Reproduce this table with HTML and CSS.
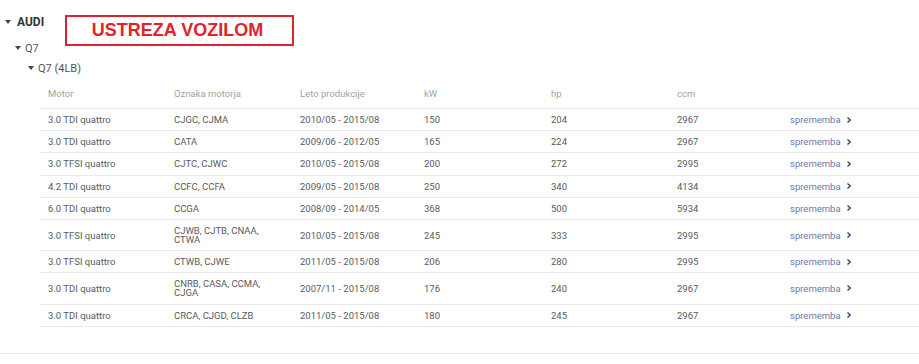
FILE: index.html
```html
<!DOCTYPE html>
<html>
<head>
<meta charset="utf-8">
<link rel="stylesheet" href="styles.css">
</head>
<body>
<div class="page">
  <div class="tree">
    <div class="node lvl0"><span class="caret"></span>AUDI</div>
    <div class="badge">USTREZA VOZILOM</div>
    <div class="node lvl1"><span class="caret"></span>Q7</div>
    <div class="node lvl2"><span class="caret"></span>Q7 (4LB)</div>
  </div>
  <div class="table">
    <div class="row head">
      <div>Motor</div><div>Oznaka motorja</div><div>Leto produkcije</div><div>kW</div><div>hp</div><div>ccm</div><div></div>
    </div>
    <div class="row"><div>3.0 TDI quattro</div><div class="code">CJGC, CJMA</div><div>2010/05 - 2015/08</div><div>150</div><div>204</div><div>2967</div><div><a class="link">sprememba<svg viewBox="0 0 6 8" width="6" height="8"><path d="M1.5 1.5 L4.2 4 L1.5 6.5" fill="none" stroke="#34446b" stroke-width="1.4"/></svg></a></div></div>
    <div class="row"><div>3.0 TDI quattro</div><div class="code">CATA</div><div>2009/06 - 2012/05</div><div>165</div><div>224</div><div>2967</div><div><a class="link">sprememba<svg viewBox="0 0 6 8" width="6" height="8"><path d="M1.5 1.5 L4.2 4 L1.5 6.5" fill="none" stroke="#34446b" stroke-width="1.4"/></svg></a></div></div>
    <div class="row"><div>3.0 TFSI quattro</div><div class="code">CJTC, CJWC</div><div>2010/05 - 2015/08</div><div>200</div><div>272</div><div>2995</div><div><a class="link">sprememba<svg viewBox="0 0 6 8" width="6" height="8"><path d="M1.5 1.5 L4.2 4 L1.5 6.5" fill="none" stroke="#34446b" stroke-width="1.4"/></svg></a></div></div>
    <div class="row"><div>4.2 TDI quattro</div><div class="code">CCFC, CCFA</div><div>2009/05 - 2015/08</div><div>250</div><div>340</div><div>4134</div><div><a class="link">sprememba<svg viewBox="0 0 6 8" width="6" height="8"><path d="M1.5 1.5 L4.2 4 L1.5 6.5" fill="none" stroke="#34446b" stroke-width="1.4"/></svg></a></div></div>
    <div class="row"><div>6.0 TDI quattro</div><div class="code">CCGA</div><div>2008/09 - 2014/05</div><div>368</div><div>500</div><div>5934</div><div><a class="link">sprememba<svg viewBox="0 0 6 8" width="6" height="8"><path d="M1.5 1.5 L4.2 4 L1.5 6.5" fill="none" stroke="#34446b" stroke-width="1.4"/></svg></a></div></div>
    <div class="row"><div>3.0 TFSI quattro</div><div class="code">CJWB, CJTB, CNAA, CTWA</div><div>2010/05 - 2015/08</div><div>245</div><div>333</div><div>2995</div><div><a class="link">sprememba<svg viewBox="0 0 6 8" width="6" height="8"><path d="M1.5 1.5 L4.2 4 L1.5 6.5" fill="none" stroke="#34446b" stroke-width="1.4"/></svg></a></div></div>
    <div class="row"><div>3.0 TFSI quattro</div><div class="code">CTWB, CJWE</div><div>2011/05 - 2015/08</div><div>206</div><div>280</div><div>2995</div><div><a class="link">sprememba<svg viewBox="0 0 6 8" width="6" height="8"><path d="M1.5 1.5 L4.2 4 L1.5 6.5" fill="none" stroke="#34446b" stroke-width="1.4"/></svg></a></div></div>
    <div class="row"><div>3.0 TDI quattro</div><div class="code">CNRB, CASA, CCMA, CJGA</div><div>2007/11 - 2015/08</div><div>176</div><div>240</div><div>2967</div><div><a class="link">sprememba<svg viewBox="0 0 6 8" width="6" height="8"><path d="M1.5 1.5 L4.2 4 L1.5 6.5" fill="none" stroke="#34446b" stroke-width="1.4"/></svg></a></div></div>
    <div class="row"><div>3.0 TDI quattro</div><div class="code">CRCA, CJGD, CLZB</div><div>2011/05 - 2015/08</div><div>180</div><div>245</div><div>2967</div><div><a class="link">sprememba<svg viewBox="0 0 6 8" width="6" height="8"><path d="M1.5 1.5 L4.2 4 L1.5 6.5" fill="none" stroke="#34446b" stroke-width="1.4"/></svg></a></div></div>
  </div>
  <div class="footer-line"></div>
</div>
</body>
</html>
```
FILE: styles.css
```css
html, body {
  margin: 0;
  padding: 0;
  background: #fff;
}
.page {
  position: relative;
  font-family: Roboto, "Liberation Sans", sans-serif;
  color: #5a5a5a;
  padding-top: 14px;
}
.tree {
  display: flex;
  flex-direction: column;
}
.node {
  display: flex;
  align-items: center;
  color: #444;
}
.caret {
  display: inline-block;
  width: 0;
  height: 0;
  border-left: 3px solid transparent;
  border-right: 3px solid transparent;
  border-top: 4px solid #444;
  margin-right: 4px;
}
.lvl0 {
  padding-left: 5px;
  font-size: 12px;
  font-weight: bold;
  height: 16px;
  color: #333;
}
.lvl0 .caret { margin-right: 6px; }
.lvl1 {
  padding-left: 15px;
  font-size: 11px;
  height: 16px;
  margin-top: 10px;
  color: #555;
}
.lvl2 {
  padding-left: 28px;
  font-size: 11px;
  height: 16px;
  margin-top: 4px;
  color: #555;
}
.badge {
  position: absolute;
  left: 65px;
  top: 15px;
  width: 221px;
  height: 27px;
  border: 2px solid #d8262c;
  color: #e3222a;
  font-family: "Liberation Sans", Arial, sans-serif;
  font-weight: bold;
  font-size: 18px;
  display: flex;
  align-items: center;
  justify-content: center;
  padding-right: 4px;
}
.table {
  margin-left: 40px;
  margin-top: 5px;
  font-size: 9.5px;
}
.row {
  display: grid;
  grid-template-columns: 126px 126px 124px 127px 126px 113px 1fr;
  border-bottom: 1px solid #ececec;
  align-items: center;
}
.row > div {
  padding: 6.1px 8px;
  line-height: 9px;
}
.row .code {
  padding-right: 26px;
}
.head {
  color: #a2a2a2;
  height: 27px;
  align-items: start;
}
.head > div {
  padding-top: 8px;
}
.link {
  color: #6679ab;
  display: inline-flex;
  align-items: center;
  gap: 5px;
}
.link svg {
  display: block;
}
.footer-line {
  margin-top: 26px;
  border-bottom: 1px solid #e8e8e8;
}
```
